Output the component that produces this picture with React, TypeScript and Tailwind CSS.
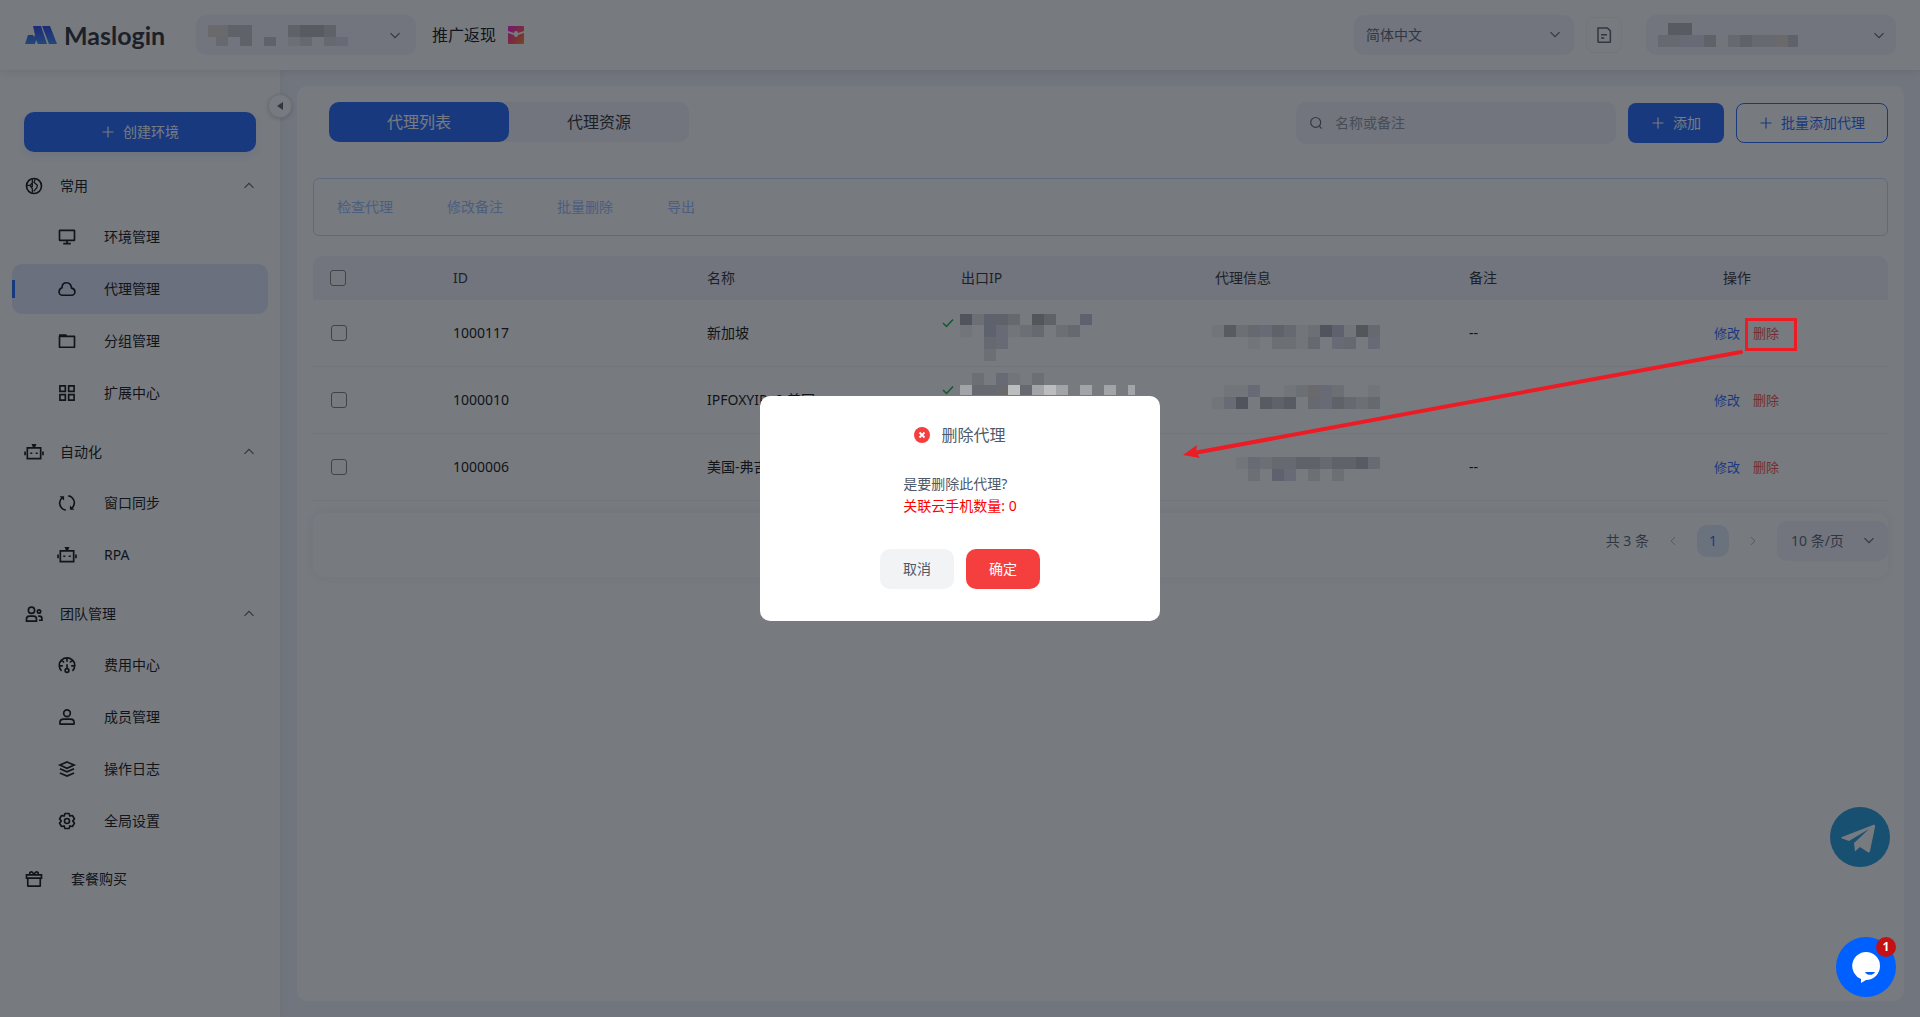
import React, { useState } from "react";

type MosaicRow = { x?: number; h?: number; cells: string };

// palette for the masked text blocks, "." leaves a cell empty
const SHADES: Record<string, string> = {
    a: "#51545c",
    b: "#585b62",
    c: "#5f6268",
    d: "#666a70",
    e: "#6c7075",
    f: "#727579",
    g: "#5e626e",
    h: "#686b76",
    i: "#54565a",
    w: "#bcbdbe",
    x: "#a3a4a8",
    y: "#6a696b",
};

function Mosaic({ rows, width }: { rows: MosaicRow[]; width: number }) {
    let top = 0;
    const rects: React.ReactNode[] = [];
    rows.forEach((row, r) => {
        const h = row.h ?? 12;
        row.cells.split("").forEach((c, i) => {
            if (c === ".") return;
            rects.push(<rect key={`${r}-${i}`} x={(row.x ?? 0) + i * 12} y={top} width={12} height={h} fill={SHADES[c]} />);
        });
        top += h;
    });
    return (
        <svg width={width} height={top} shapeRendering="crispEdges" className="relative z-30 shrink-0" aria-hidden="true">
            {rects}
        </svg>
    );
}

function Icon({ children, className = "w-5 h-5" }: { children: React.ReactNode; className?: string }) {
    return (
        <svg viewBox="0 0 48 48" fill="none" stroke="currentColor" strokeWidth="4" className={`${className} shrink-0`} aria-hidden="true">
            {children}
        </svg>
    );
}

const ChevronDown = ({ className = "w-3.5 h-3.5" }: { className?: string }) => (
    <Icon className={className}><path d="M39.6 17.443 24.043 33 8.487 17.443" /></Icon>
);
const ChevronUp = () => <Icon className="w-3.5 h-3.5"><path d="M39.6 30.557 24.043 15 8.487 30.557" /></Icon>;
const Plus = () => <Icon className="w-3.5 h-3.5"><path d="M5 24h38M24 5v38" /></Icon>;

const robot = (
    <>
        <path d="M8 14h32v26H8zM2.500 23v9M45.500 23v9" />
        <path d="M18 5h12l-4 9h-4z" fill="currentColor" stroke="none" />
        <path d="M15 25h5v4h-5zM28 25h5v4h-5z" fill="currentColor" stroke="none" />
    </>
);

const icons: Record<string, React.ReactNode> = {
    globe: (
        <>
            <circle cx="24" cy="24" r="18" />
            <path d="M20 7v9l-5 6-8 1M20 16v9h-4l4 5v10M27 7l-3 8 8 7-1 6-8 9" strokeWidth="3" />
        </>
    ),
    desktop: <path d="M24 32v8m0 0h-9m9 0h9M7 32h34a1 1 0 0 0 1-1V9a1 1 0 0 0-1-1H7a1 1 0 0 0-1 1v22a1 1 0 0 0 1 1Z" />,
    cloud: <path d="M5 31c0 4.400 3.600 8 8 8h22c4.400 0 8-3.600 8-8 0-5-3-8-8-9-1-8-5.500-13-12-13-7 0-11 5-11 12-4.500 1.500-7 5-7 10Z" />,
    folder: (
        <>
            <path d="M6 13h36v26H6z" strokeLinejoin="round" />
            <path d="M5 8h17l4 6H5z" fill="currentColor" stroke="none" />
        </>
    ),
    apps: <path d="M7 7h13v13H7zM28 7h13v13H28zM7 28h13v13H7zM28 28h13v13H28z" />,
    robot,
    sync: (
        <>
            <path d="M14 10c-9 7-10 18-3 26 2.500 3 6 4.500 10 5M34 38c9-7 10-18 3-26-2.500-3-6-4.500-10-5" />
            <path d="M6 8h11v10zM42 40H31V30z" fill="currentColor" stroke="none" />
        </>
    ),
    group: (
        <>
            <circle cx="18" cy="15" r="7.500" />
            <circle cx="36" cy="18" r="4" />
            <path d="M6 41v-5c0-4 3-7 7-7h10c4 0 7 3 7 7v5zM34 29h3c3.500 0 6 2.500 6 6v4h-7" />
        </>
    ),
    dashboard: (
        <>
            <path d="M11 38C3 31 4 18 11 12c7-7 19-7 26 0 7 6 8 19 0 26M24 7v9M11 12l6 6M37 12l-6 6M6 26h8M42 26h-8M24 22v11" />
            <circle cx="24" cy="37" r="4.500" />
        </>
    ),
    user: (
        <>
            <circle cx="24" cy="15" r="8" />
            <path d="M7 37c0-4.970 4.030-8 9-8h16c4.970 0 9 3.030 9 8v3a1 1 0 0 1-1 1H8a1 1 0 0 1-1-1v-3Z" />
        </>
    ),
    layers: <path d="M24 7 41 14.600l-17 7.600-17-7.600L24 7ZM41 23.300l-17 7.600-17-7.600M41 33.400l-17 7.600-17-7.600" />,
    settings: (
        <>
            <path d="M18.797 6.732A1 1 0 0 1 19.760 6h8.480a1 1 0 0 1 .964.732l1.285 4.628a1 1 0 0 0 1.213.7l4.651-1.200a1 1 0 0 1 1.116.468l4.240 7.344a1 1 0 0 1-.153 1.200L38.193 23.300a1 1 0 0 0 0 1.402l3.364 3.427a1 1 0 0 1 .153 1.200l-4.240 7.344a1 1 0 0 1-1.116.468l-4.650-1.200a1 1 0 0 0-1.214.7l-1.285 4.628a1 1 0 0 1-.964.732h-8.480a1 1 0 0 1-.963-.732L17.510 36.640a1 1 0 0 0-1.213-.7l-4.650 1.200a1 1 0 0 1-1.116-.468l-4.240-7.344a1 1 0 0 1 .153-1.200L9.809 24.700a1 1 0 0 0 0-1.402l-3.364-3.427a1 1 0 0 1-.153-1.200l4.240-7.344a1 1 0 0 1 1.116-.468l4.650 1.200a1 1 0 0 0 1.213-.7l1.286-4.628Z" />
            <circle cx="24" cy="24" r="6" />
        </>
    ),
    gift: <path d="M6 14h36v8H6zM9 22v18a1 1 0 0 0 1 1h28a1 1 0 0 0 1-1V22M24 14c-2-6-5-8-8-7s-3 5 0 7M24 14c2-6 5-8 8-7s3 5 0 7" />,
};

const menu = [
    {
        label: "常用",
        icon: "globe",
        items: [
            { label: "环境管理", icon: "desktop" },
            { label: "代理管理", icon: "cloud", active: true },
            { label: "分组管理", icon: "folder" },
            { label: "扩展中心", icon: "apps" },
        ],
    },
    {
        label: "自动化",
        icon: "robot",
        items: [
            { label: "窗口同步", icon: "sync" },
            { label: "RPA", icon: "robot" },
        ],
    },
    {
        label: "团队管理",
        icon: "group",
        items: [
            { label: "费用中心", icon: "dashboard" },
            { label: "成员管理", icon: "user" },
            { label: "操作日志", icon: "layers" },
            { label: "全局设置", icon: "settings" },
        ],
    },
];

type Proxy = { id: string; name: string; remark: string; ip?: MosaicRow[]; info: MosaicRow[]; infoPad: string };

const proxies: Proxy[] = [
    {
        id: "1000117",
        name: "新加坡",
        remark: "--",
        ip: [
            { h: 11, cells: "aegcd.ic..g" },
            { cells: "f.ghfed.ed." },
            { cells: "..dh" },
            { cells: "..e." },
        ],
        info: [{ cells: "fbedhcdfeagfid" }, { cells: "...f.eefd.hd.h" }],
        infoPad: "pt-[25px]",
    },
    {
        id: "1000010",
        name: "IPFOXYIPv6-美国",
        remark: "",
        ip: [{ h: 12, cells: ".e.hf.e" }, { h: 10, cells: "xddywdxwx.x.x.x" }],
        info: [{ cells: ".ffh..feyhe..f" }, { cells: "fha.bcb.dhcded" }],
        infoPad: "pt-[18px]",
    },
    {
        id: "1000006",
        name: "美国-弗吉尼亚",
        remark: "--",
        info: [{ cells: "..fheddccdccbh" }, { cells: "...e.gh.e.e" }],
        infoPad: "pt-[23px]",
    },
];

function Header() {
    return (
        <header className="relative flex h-[70px] items-center bg-white pl-6 pr-6 shadow-[0_2px_8px_rgba(0,0,0,0.1)]">
            <a href="#" className="flex w-[172px] items-center gap-1.5 text-[#1d2129]">
                <svg viewBox="0 0 34 20" className="h-5 w-[34px]" aria-hidden="true">
                    <defs>
                        <linearGradient id="logo" x1="0" y1="0" x2="0" y2="1">
                            <stop offset="0" stopColor="#2038e8" />
                            <stop offset="1" stopColor="#2f80f0" />
                        </linearGradient>
                    </defs>
                    <path d="M9 1h8l6 18h-9l-2-4-1 4H1l3-9h5l1 2 1-2-2-9z" fill="url(#logo)" />
                    <path d="M18 1h8l7 18h-8z" fill="url(#logo)" />
                </svg>
                <span className="font-[Lato,'Liberation_Sans',sans-serif] text-[25px] leading-7 font-bold">Maslogin</span>
            </a>
            <button type="button" aria-label="切换团队" className="flex h-10 w-[220px] items-center justify-between rounded-[10px] bg-[#f2f3f9] px-3 text-[#4e5969]">
                <Mosaic width={140} rows={[{ h: 12, x: -4, cells: "yycc...cbbc" }, { h: 9, x: -4, cells: ".d.c.c.ed.dh" }]} />
                <ChevronDown className="mr-0.5 w-3.5 h-3.5" />
            </button>
            <a href="#" className="ml-4 flex items-center gap-3 text-base text-black">
                推广返现
                <svg viewBox="0 0 16 18" className="h-[18px] w-4" aria-hidden="true">
                    <defs>
                        <linearGradient id="gift" x1="0" y1="0" x2="1" y2="1">
                            <stop offset="0" stopColor="#ff00e5" />
                            <stop offset="0.6" stopColor="#ff4a4a" />
                            <stop offset="1" stopColor="#ff8a00" />
                        </linearGradient>
                    </defs>
                    <rect width="16" height="18" rx="1" fill="url(#gift)" />
                    <path d="M0 5l6 2a2 2 0 0 1 4 0l6-2v2l-6 2a2 2 0 0 1-4 0L0 7z" fill="#fff" />
                </svg>
            </a>
            <div className="ml-auto flex items-center">
                <div className="relative w-[220px]">
                    <select aria-label="语言" className="h-10 w-full appearance-none rounded-[10px] bg-[#f2f3f9] px-3 text-sm text-[#4e5969]">
                        <option>简体中文</option>
                        <option>English</option>
                    </select>
                    <span className="pointer-events-none absolute right-3 top-3 text-[#4e5969]"><ChevronDown /></span>
                </div>
                <button type="button" aria-label="文档" className="ml-3 flex h-9 w-9 items-center justify-center rounded-lg border border-[#f2f3f5] text-[#4e5969]">
                    <Icon className="w-[18px] h-[18px]">
                        <path d="M8 5h25l8 8v29a1 1 0 0 1-1 1H9a1 1 0 0 1-1-1zM16 23h16M16 32h9" />
                    </Icon>
                </button>
                <button type="button" aria-label="账户" className="ml-6 flex h-10 w-[250px] items-center justify-between rounded-[10px] bg-[#f2f3f9] pl-3 pr-2.5 text-[#4e5969]">
                    <Mosaic width={140} rows={[{ h: 12, x: 10, cells: "bb" }, { cells: "ddhhcfdcddyc", x: -2 }]} />
                    <ChevronDown />
                </button>
            </div>
        </header>
    );
}

function Sidebar() {
    return (
        <aside className="w-[281px] shrink-0 border-r border-[#ebecf0] bg-white shadow-[2px_0_8px_rgba(0,0,0,0.04)]">
            <div className="relative flex flex-col pt-[42px]">
                <button
                    type="button"
                    aria-label="收起"
                    className="absolute -right-3 top-6 flex h-6 w-6 items-center justify-center rounded-full border border-[#e5e6eb] bg-white shadow-[0_1px_4px_rgba(0,0,0,0.2)]"
                >
                    <svg viewBox="0 0 6 8" className="h-2 w-1.5" aria-hidden="true"><path d="M6 0v8L0 4z" fill="#4e5969" /></svg>
                </button>
                <button type="button" className="mx-6 flex h-10 items-center justify-center gap-2 rounded-[10px] bg-[#165dff] text-sm text-white shadow-[0_4px_10px_rgba(22,93,255,0.1)]">
                    <Plus />
                    创建环境
                </button>
                <nav className="mt-2 flex flex-col gap-2 px-3 text-sm text-black">
                    {menu.map((group) => (
                        <div key={group.label}>
                            <button type="button" className="flex h-[52px] w-full items-center gap-4 pl-3 pr-3">
                                <Icon>{icons[group.icon]}</Icon>
                                {group.label}
                                <span className="ml-auto text-[#4e5969]"><ChevronUp /></span>
                            </button>
                            <ul className="flex flex-col gap-0.5">
                                {group.items.map((item) => (
                                    <li key={item.label}>
                                        <a href="#" className={`flex h-[50px] items-center rounded-[10px] ${item.active ? "bg-[#dfe5fb]" : ""}`}>
                                            <span className={`h-[18px] w-[3px] ${item.active ? "bg-[#165dff]" : ""}`} />
                                            <span className="ml-[42px] mr-[27px]"><Icon>{icons[item.icon]}</Icon></span>
                                            {item.label}
                                        </a>
                                    </li>
                                ))}
                            </ul>
                        </div>
                    ))}
                    <a href="#" className="flex h-[50px] items-center gap-[27px] pl-3">
                        <Icon>{icons.gift}</Icon>
                        套餐购买
                    </a>
                </nav>
            </div>
        </aside>
    );
}

function ProxyTable() {
    return (
        <table className="mt-5 w-full table-fixed border-separate border-spacing-0 text-left text-sm text-[#000]">
            <thead>
                <tr className="h-11 text-[#1d2129] [&>th]:bg-[#f2f3f9] [&>th]:px-4 [&>th]:font-normal">
                    <th className="w-[124px] rounded-tl-[10px]">
                        <input type="checkbox" aria-label="全选" className="ml-px block h-4 w-4 appearance-none rounded-[3px] border border-[#767676] bg-white/40" />
                    </th>
                    <th>ID</th>
                    <th>名称</th>
                    <th>出口IP</th>
                    <th>代理信息</th>
                    <th>备注</th>
                    <th className="w-[181px] rounded-tr-[10px]">操作</th>
                </tr>
            </thead>
            <tbody>
                {proxies.map((p) => (
                    <tr key={p.id} className="h-[67px] [&>td]:border-b [&>td]:border-[#f0f1f4]">
                        <td className="pl-[18px]">
                            <input type="checkbox" aria-label={p.name} className="block h-4 w-4 appearance-none rounded-[3px] border border-[#767676]" />
                        </td>
                        <td className="px-4">{p.id}</td>
                        <td className="whitespace-nowrap px-4">{p.name}</td>
                        <td className="p-0 align-top">
                            {p.ip && (
                                <div className="-ml-[3px] flex h-[66px] items-start gap-1.5 overflow-visible">
                                    <svg viewBox="0 0 12 10" className="mt-[18px] h-2.5 w-3 shrink-0" fill="none" stroke="#00a83a" strokeWidth="1.500" aria-hidden="true">
                                        <path d="M1 5l3.500 3.500L11 1.500" />
                                    </svg>
                                    <div className={p.id === "1000117" ? "pt-3.5" : "pt-1.5"}><Mosaic width={175} rows={p.ip} /></div>
                                </div>
                            )}
                        </td>
                        <td className={`pb-0 pl-[13px] align-top ${p.infoPad}`}><Mosaic width={180} rows={p.info} /></td>
                        <td className="px-4">{p.remark}</td>
                        <td className="pl-[7px]">
                            <div className="flex gap-[13px] text-[13px]">
                                <a href="#" className="text-[#165dff]">修改</a>
                                <a href="#" className="text-[#f53f3f]">删除</a>
                            </div>
                        </td>
                    </tr>
                ))}
            </tbody>
        </table>
    );
}

function Pagination() {
    return (
        <div className="mt-3 flex h-16 items-start justify-end rounded-[10px] bg-white pt-2 text-sm text-[#4e5969] shadow-[0_0_12px_rgba(40,60,160,0.08)]">
            <div className="flex h-10 items-center">
                <span>共 3 条</span>
                <button type="button" aria-label="上一页" className="ml-2 flex h-8 w-8 items-center justify-center text-[#a9aeb8]">
                    <Icon className="w-3 h-3"><path d="M32 8.400 16.444 23.956 32 39.513" /></Icon>
                </button>
                <button type="button" className="ml-2 h-8 w-8 rounded-[10px] bg-[#dcebf9] text-[#165dff]">1</button>
                <button type="button" aria-label="下一页" className="ml-2 flex h-8 w-8 items-center justify-center text-[#a9aeb8]">
                    <Icon className="w-3 h-3"><path d="m16 39.513 15.556-15.557L16 8.400" /></Icon>
                </button>
                <div className="relative ml-2 w-[111px]">
                    <select aria-label="每页条数" className="h-10 w-full appearance-none rounded-[10px] bg-[#f2f3f9] pl-3.5 text-sm text-[#4e5969]">
                        <option>10 条/页</option>
                        <option>20 条/页</option>
                    </select>
                    <span className="pointer-events-none absolute right-3 top-3"><ChevronDown /></span>
                </div>
            </div>
        </div>
    );
}

function DeleteDialog() {
    return (
        <div className="fixed inset-0 z-40 flex items-center justify-center">
            <div role="dialog" aria-labelledby="dialog-title" className="flex w-[400px] flex-col items-center rounded-[10px] bg-white pb-8 pt-[27px] text-[#4e5969]">
                <h2 id="dialog-title" className="flex items-center gap-[11px] text-base leading-6">
                    <svg viewBox="0 0 16 16" className="h-4 w-4" aria-hidden="true">
                        <circle cx="8" cy="8" r="8" fill="#f53f3f" />
                        <path d="M5.500 5.500l5 5M10.500 5.500l-5 5" stroke="#fff" strokeWidth="1.800" />
                    </svg>
                    删除代理
                </h2>
                <div className="mt-[26px] text-sm leading-[22px]">
                    <p>是要删除此代理?</p>
                    <p className="text-[#ff0000]">关联云手机数量: 0</p>
                </div>
                <div className="mt-8 flex gap-3 text-sm">
                    <button type="button" className="h-10 w-[74px] rounded-[10px] bg-[#f2f3f5]">取消</button>
                    <button type="button" className="h-10 w-[74px] rounded-[10px] bg-[#f53f3f] text-white">确定</button>
                </div>
            </div>
        </div>
    );
}

export default function App() {
    const [tab, setTab] = useState("代理列表");

    return (
        <div className="relative flex min-h-screen flex-col bg-[#f0f2fb] font-['Noto_Sans','Noto_Sans_CJK_SC',sans-serif]">
            <Header />
            <div className="flex flex-1">
                <Sidebar />
                <main className="flex min-w-0 flex-1 flex-col p-4">
                    <section className="flex-1 rounded-[10px] bg-white p-4">
                        <div className="flex items-start justify-between">
                            <div className="ml-4 flex h-10 w-[360px] rounded-[10px] bg-[#f2f3f9]">
                                {["代理列表", "代理资源"].map((t) => (
                                    <button
                                        key={t}
                                        type="button"
                                        onClick={() => setTab(t)}
                                        className={`flex-1 rounded-[10px] text-base ${tab === t ? "bg-[#165dff] text-white" : "text-[#1d2129]"}`}
                                    >
                                        {t}
                                    </button>
                                ))}
                            </div>
                            <div className="flex items-center gap-3">
                                <label className="flex h-[42px] w-[320px] items-center gap-3 rounded-[10px] bg-[#f2f3f9] px-[13px] text-[#4e5969]">
                                    <Icon className="w-3.5 h-3.5">
                                        <circle cx="23" cy="22" r="17" />
                                        <path d="m35 34 8 9" />
                                    </Icon>
                                    <input type="text" aria-label="搜索" placeholder="名称或备注" className="min-w-0 flex-1 bg-transparent text-sm outline-none placeholder:text-[#86909c]" />
                                </label>
                                <button type="button" className="flex h-10 w-24 items-center justify-center gap-2 rounded-lg bg-[#165dff] text-sm text-white">
                                    <Plus />
                                    添加
                                </button>
                                <button type="button" className="flex h-10 w-[152px] items-center justify-center gap-2 rounded-lg border border-[#165dff] bg-white text-sm text-[#165dff]">
                                    <Plus />
                                    批量添加代理
                                </button>
                            </div>
                        </div>
                        <div className="mt-[34px] flex h-[58px] items-center gap-[54px] rounded-md border border-[#bedaff] px-[23px] text-sm text-[#94b8ff]">
                            <button type="button" disabled>检查代理</button>
                            <button type="button" disabled>修改备注</button>
                            <button type="button" disabled>批量删除</button>
                            <button type="button" disabled>导出</button>
                        </div>
                        <ProxyTable />
                        <Pagination />
                    </section>
                </main>
            </div>

            <a href="#" aria-label="Telegram" className="fixed bottom-[150px] right-[30px] z-10">
                <svg viewBox="0 0 60 60" className="h-[60px] w-[60px]" aria-hidden="true">
                    <circle cx="30" cy="30" r="30" fill="#1296db" />
                    <path d="M12 30 43 18c1.500-.5 2.500 0 2 2l-5 24c-.4 1.500-1.500 2-2.500 1L30 40l-5 4.500L24 36l15-14-20 12-7-2.500c-1-.5-1-1 0-1.500z" fill="#fff" />
                </svg>
            </a>

            <div className="fixed inset-0 z-20 bg-[#1d2129]/60" />

            {/* callout from the delete link to the dialog */}
            <svg className="pointer-events-none absolute inset-0 z-30 h-full w-full" aria-hidden="true">
                <rect x="1746.500" y="319.500" width="49" height="30" fill="none" stroke="#ed1c24" strokeWidth="3" />
                <path d="M1741 352 1194 453" stroke="#ed1c24" strokeWidth="4" strokeLinecap="round" />
                <path d="M1183 455l14-10-1 7 4 6z" fill="#ed1c24" />
            </svg>

            <DeleteDialog />

            <button type="button" aria-label="在线客服" className="fixed bottom-5 right-6 z-50 flex h-[60px] w-[60px] items-center justify-center rounded-full bg-[#0060ff]">
                <svg viewBox="0 0 30 32" className="h-8 w-[30px]" aria-hidden="true">
                    <path d="M15 1a14 14 0 1 1 0 28l-5 3v-4A14 14 0 0 1 15 1z" fill="#fff" />
                    <path d="M14 21h10c-1.500 3.500-8 4-10 0z" fill="#0060ff" />
                </svg>
                <span className="absolute right-0 top-0 flex h-5 w-5 items-center justify-center rounded-full bg-[#c41114] text-xs font-bold text-white">1</span>
            </button>
        </div>
    );
}
